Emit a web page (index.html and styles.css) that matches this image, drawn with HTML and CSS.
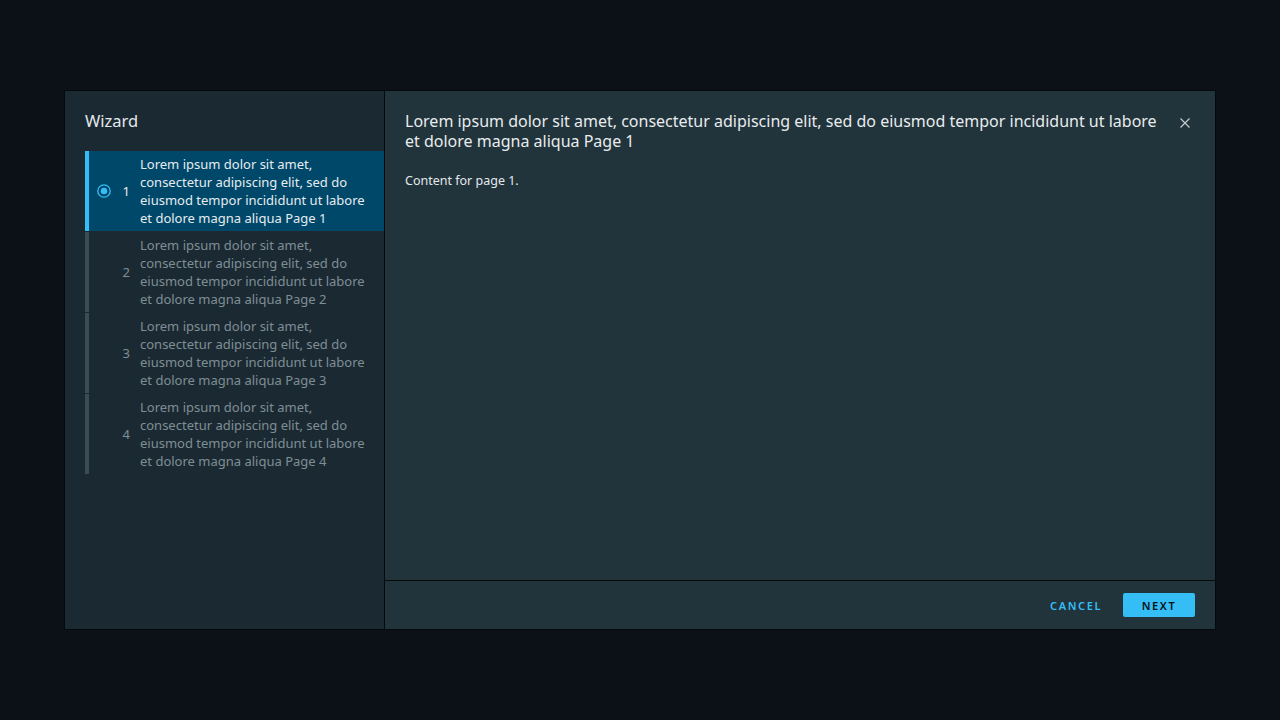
FILE: index.html
```html
<!DOCTYPE html>
<html>
<head>
<meta charset="utf-8">
<link rel="stylesheet" href="styles.css">
</head>
<body>
<div class="modal">
  <nav class="nav">
    <div class="nav-title">Wizard</div>
    <ul class="steps">
      <li class="step active">
        <span class="step-icon"><svg width="14" height="14" viewBox="0 0 14 14"><circle cx="7" cy="7" r="6.2" fill="none" stroke="#35bdf5" stroke-width="1.3"/><circle cx="7" cy="7" r="3.2" fill="#35bdf5"/></svg></span>
        <span class="step-num">1</span>
        <span class="step-text">Lorem ipsum dolor sit amet, consectetur adipiscing elit, sed do eiusmod tempor incididunt ut labore et dolore magna aliqua Page 1</span>
      </li>
      <li class="step">
        <span class="step-icon"></span>
        <span class="step-num">2</span>
        <span class="step-text">Lorem ipsum dolor sit amet, consectetur adipiscing elit, sed do eiusmod tempor incididunt ut labore et dolore magna aliqua Page 2</span>
      </li>
      <li class="step">
        <span class="step-icon"></span>
        <span class="step-num">3</span>
        <span class="step-text">Lorem ipsum dolor sit amet, consectetur adipiscing elit, sed do eiusmod tempor incididunt ut labore et dolore magna aliqua Page 3</span>
      </li>
      <li class="step">
        <span class="step-icon"></span>
        <span class="step-num">4</span>
        <span class="step-text">Lorem ipsum dolor sit amet, consectetur adipiscing elit, sed do eiusmod tempor incididunt ut labore et dolore magna aliqua Page 4</span>
      </li>
    </ul>
  </nav>
  <section class="main">
    <div class="body">
      <header class="header">
        <h1 class="title">Lorem ipsum dolor sit amet, consectetur adipiscing elit, sed do eiusmod tempor incididunt ut labore et dolore magna aliqua Page 1</h1>
        <button class="close" aria-label="Close"><svg width="12" height="12" viewBox="0 0 12 12"><path d="M1.5 1.5 L10.5 10.5 M10.5 1.5 L1.5 10.5" stroke="#c5ccd0" stroke-width="1.2" fill="none"/></svg></button>
      </header>
      <p class="content">Content for page 1.</p>
    </div>
    <footer class="footer">
      <button class="btn btn-link">CANCEL</button>
      <button class="btn btn-primary">NEXT</button>
    </footer>
  </section>
</div>
</body>
</html>
```

FILE: styles.css
```css
* { box-sizing: border-box; }
html, body { margin: 0; padding: 0; }
body {
  background: #0b1116;
  font-family: "Noto Sans", "Liberation Sans", sans-serif;
  padding-top: 90px;
}
.modal {
  width: 1152px;
  height: 540px;
  margin: 0 auto;
  border: 1px solid #05090c;
  display: flex;
}
.nav {
  width: 320px;
  flex: none;
  background: #1b2a32;
  border-right: 1px solid #05090c;
  padding: 18px 0 0 20px;
}
.nav-title {
  color: #e3e8eb;
  font-size: 16.5px;
  line-height: 24px;
  margin-bottom: 18px;
}
.steps { list-style: none; margin: 0; padding: 0; }
.step {
  display: flex;
  align-items: center;
  height: 80px;
  margin-bottom: 1px;
  border-left: 4px solid #3a4c55;
  padding-left: 8px;
  color: #7f8e95;
  font-size: 13px;
  line-height: 18px;
}
.step.active {
  background: #00486a;
  border-left-color: #35bdf5;
  color: #e6ecef;
}
.step-icon { width: 14px; height: 14px; flex: none; display: flex; }
.step-num { width: 19px; text-align: right; flex: none; margin-right: 10px; font-size: 13px; }
.step-text { width: 230px; }
.main {
  flex: 1;
  background: #21333b;
  display: flex;
  flex-direction: column;
}
.body { flex: 1; padding: 20px 20px 0 20px; }
.header { display: flex; align-items: flex-start; }
.title {
  flex: 1;
  margin: 0;
  font-weight: 400;
  font-size: 16px;
  line-height: 20px;
  color: #e8ecee;
  padding-right: 12px;
}
.close {
  background: none;
  border: 0;
  padding: 0;
  width: 20px;
  height: 20px;
  margin-top: 2px;
  display: flex;
  align-items: center;
  justify-content: center;
}
.content {
  margin: 21px 0 0;
  font-size: 12.5px;
  line-height: 18px;
  color: #e3e8eb;
}
.footer {
  height: 49px;
  border-top: 1px solid #05090c;
  display: flex;
  align-items: center;
  justify-content: flex-end;
  padding: 0 20px;
  gap: 9px;
}
.btn {
  font-family: inherit;
  font-size: 11px;
  font-weight: 600;
  letter-spacing: 1.6px;
  height: 24px;
  border: 0;
  border-radius: 2px;
  padding: 0 12px;
}
.btn-link { background: none; color: #35bdf5; }
.btn-primary { background: #35bdf5; color: #0b1116; width: 72px; }
```
